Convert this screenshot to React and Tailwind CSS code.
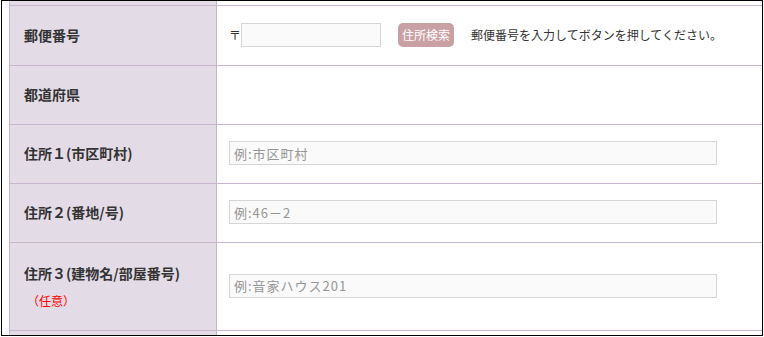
const line = "border-[#c7b5cd]";

const Row = ({ height, label, children }) => (
  <div className={`flex border-b ${line} ${height}`}>
    <div className={`w-[207px] shrink-0 bg-[#e3dce7] border-r ${line} pl-[14px] pb-[2px] flex flex-col justify-center`}>
      {label}
    </div>
    <div className="flex-1 pl-[12px] pb-[2px] flex items-center">{children}</div>
  </div>
);

const Label = ({ children }) => (
  <span className="text-[14px] leading-[20px] font-bold text-[#333333]">{children}</span>
);

const TextInput = ({ placeholder }) => (
  <input
    type="text"
    placeholder={placeholder}
    className="w-[488px] h-[24px] bg-[#fafafa] border border-[#d6d6d6] px-[4px] text-[13px] tracking-[1px] text-[#333] placeholder:text-[#969696] outline-none"
  />
);

export default function App() {
  return (
    <div
      className="w-[764px] h-[337px] bg-white overflow-hidden"
      style={{ fontFamily: '"Noto Sans CJK JP", "Noto Sans", sans-serif' }}
    >
      <div className="ml-[1px] w-[762px] h-[336px] border border-black overflow-hidden">
        <div className={`ml-[7px] w-[760px] border-l ${line}`}>
          {/* tail of the previous row */}
          <div className={`flex h-[5px] border-b ${line}`}>
            <div className={`w-[207px] shrink-0 bg-[#e3dce7] border-r ${line}`} />
          </div>

          <Row height="h-[60px]" label={<Label>郵便番号</Label>}>
            <span className="text-[12px] text-[#333] leading-none">〒</span>
            <input
              type="text"
              className="w-[140px] h-[24px] bg-[#fafafa] border border-[#d6d6d6] outline-none"
            />
            <button className="ml-[17px] h-[24px] px-[4px] rounded-[5px] bg-[#c9a1a4] text-white text-[12px] leading-none">
              住所検索
            </button>
            <span className="ml-[17px] text-[12px] text-[#333]">
              郵便番号を入力してボタンを押してください。
            </span>
          </Row>

          <Row height="h-[59px]" label={<Label>都道府県</Label>} />

          <Row height="h-[59px]" label={<Label>住所１(市区町村)</Label>}>
            <TextInput placeholder="例:市区町村" />
          </Row>

          <Row height="h-[59px]" label={<Label>住所２(番地/号)</Label>}>
            <TextInput placeholder="例:46－2" />
          </Row>

          <Row
            height="h-[88px]"
            label={
              <>
                <Label>住所３(建物名/部屋番号)</Label>
                <span className="mt-[10px] ml-[3px] text-[12px] leading-[16px] text-[#ff0000]">（任意）</span>
              </>
            }
          >
            <TextInput placeholder="例:音家ハウス201" />
          </Row>

          <div className="flex h-[10px]">
            <div className={`w-[207px] shrink-0 bg-[#e3dce7] border-r ${line}`} />
          </div>
        </div>
      </div>
    </div>
  );
}
